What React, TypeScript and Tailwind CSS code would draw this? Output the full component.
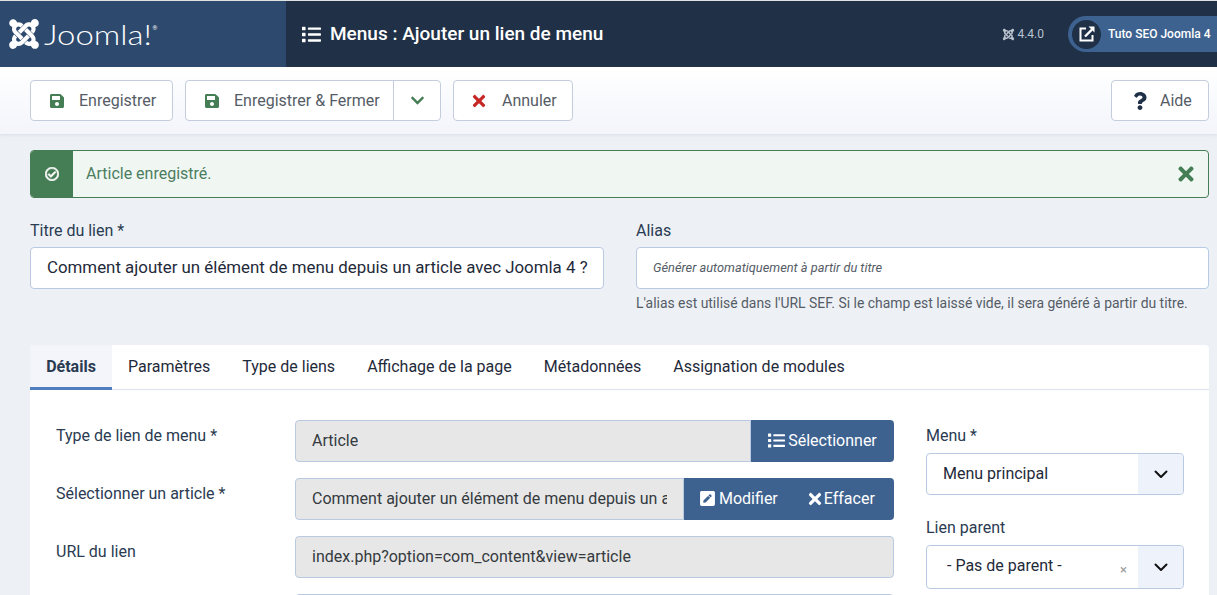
import { FaChevronDown, FaJoomla, FaList, FaPenSquare, FaQuestion, FaRegCheckCircle, FaSave, FaTimes } from "react-icons/fa";
import type { ReactNode } from "react";

function ToolButton({ icon, label, className = "" }: { icon: ReactNode; label: string; className?: string }) {
  return (
    <div className={`flex h-[41px] items-center rounded-[4px] border border-[#c3cddd] bg-white text-[#555c66] ${className}`}>
      {icon}
      <span>{label}</span>
    </div>
  );
}

function Chevron() {
  return (
    <div className="flex h-full w-[45px] items-center justify-center rounded-r-[4px] bg-[#eef3fb]">
      <svg width="16" height="16" viewBox="0 0 16 16" fill="none" stroke="#111" strokeWidth="2" strokeLinecap="round" strokeLinejoin="round">
        <path d="M2.5 5.5 8 11l5.5-5.5" />
      </svg>
    </div>
  );
}

function FormRow({ label, children }: { label: string; children: ReactNode }) {
  return (
    <div className="flex h-[42px]">
      <div className="w-[239px] pt-[4px] text-[#2a3b52]">{label}</div>
      <div className="flex w-[599px]">{children}</div>
    </div>
  );
}

function Disabled({ text, className = "" }: { text: string; className?: string }) {
  return (
    <div className={`flex h-[42px] min-w-0 flex-1 items-center border border-[#b9c9e2] bg-[#e7e7e7] px-[16px] text-[#343a40] ${className}`}>
      <span className="overflow-hidden whitespace-nowrap">{text}</span>
    </div>
  );
}

export default function App() {
  const tabs = ["Paramètres", "Type de liens", "Affichage de la page", "Métadonnées", "Assignation de modules"];

  return (
    <div className="h-[595px] overflow-hidden bg-[#edf1f6] text-[16px] font-['Roboto',sans-serif]">
      <div className="h-[1px] bg-[#dfe1e3]" />
      <header className="flex h-[66px] items-center bg-[#1f3047] text-white">
        <div className="flex h-full w-[286px] items-center bg-[#2d4a6e] pl-[7px]">
          <FaJoomla className="text-[34px]" />
          <span className="ml-[3px] origin-left scale-x-[1.22] font-['Lato',sans-serif] text-[27px] leading-none font-light">Joomla!</span>
          <span className="mb-[14px] ml-[20px] text-[6px]">®</span>
        </div>
        <div className="flex flex-1 items-center pl-[16px]">
          <FaList className="mr-[9px] text-[19px]" />
          <h1 className="text-[19px] font-medium">Menus : Ajouter un lien de menu</h1>
        </div>
        <div className="mr-[24px] flex items-center text-[12px] text-[#b9c2cf]">
          <FaJoomla className="mr-[2px] text-[13px]" />
          4.4.0
        </div>
        <div className="flex h-[36px] w-[149px] items-center rounded-l-[18px] bg-[#3e6290] pl-[4px]">
          <div className="flex h-[29px] w-[29px] items-center justify-center rounded-full bg-[#1f3047]">
            <svg width="16" height="16" viewBox="0 0 16 16" fill="none" stroke="#fff" strokeWidth="2">
              <path d="M7 2.5H1.5v12h12V9" />
              <path d="M6 10.5 13 3.5" strokeWidth="2.4" />
              <path d="M9.5 0.5H15.5V6.5Z" fill="#fff" stroke="none" />
            </svg>
          </div>
          <span className="ml-[7px] whitespace-nowrap text-[12px] font-medium">Tuto SEO Joomla 4</span>
        </div>
      </header>

      <div className="flex h-[67px] items-center bg-gradient-to-b from-white to-[#f3f5fb] pl-[30px] pr-[8px] shadow-[0_1px_3px_rgba(120,140,170,0.2)]">
        <ToolButton className="w-[143px] pl-[18px]" label="Enregistrer" icon={<FaSave className="mr-[14px] text-[16px] text-[#457d54]" />} />
        <div className="ml-[12px] flex h-[41px] w-[256px] items-center rounded-[4px] border border-[#c3cddd] bg-white text-[#555c66]">
          <FaSave className="ml-[18px] mr-[14px] text-[16px] text-[#457d54]" />
          <span>Enregistrer & Fermer</span>
          <div className="ml-auto flex h-full w-[47px] items-center justify-center border-l border-[#c3cddd]">
            <FaChevronDown className="text-[15px] text-[#457d54]" />
          </div>
        </div>
        <ToolButton className="ml-[12px] w-[120px] pl-[16px]" label="Annuler" icon={<FaTimes className="mr-[14px] text-[18px] text-[#c52827]" />} />
        <ToolButton className="ml-auto w-[98px] pl-[19px]" label="Aide" icon={<FaQuestion className="mr-[11px] text-[18px] text-[#1f3047]" />} />
      </div>

      <main className="pl-[30px] pr-[8px] pt-[16px]">
        <div className="flex h-[48px] items-stretch overflow-hidden rounded-[4px] border border-[#457d54] bg-[#f0f7f3] text-[#4c7d5e]">
          <div className="flex w-[42px] items-center justify-center bg-[#457d54] text-white">
            <FaRegCheckCircle className="text-[14px]" stroke="currentColor" strokeWidth={24} />
          </div>
          <div className="flex flex-1 items-center pl-[13px]">Article enregistré.</div>
          <div className="flex w-[45px] items-center justify-center text-[#457d54]">
            <FaTimes className="text-[22px]" />
          </div>
        </div>

        <div className="mt-[21px] grid grid-cols-[574px_573px] gap-x-[32px]">
          <div>
            <div className="h-[28px] text-[#2a3b52]">Titre du lien *</div>
            <div className="flex h-[42px] items-center rounded-[4px] border border-[#b9c9e2] bg-white pl-[16px] text-[16.88px] text-[#1f2a3a]">
              Comment ajouter un élément de menu depuis un article avec Joomla 4 ?
            </div>
          </div>
          <div>
            <div className="h-[28px] text-[#2a3b52]">Alias</div>
            <div className="flex h-[42px] items-center rounded-[4px] border border-[#b9c9e2] bg-white pl-[16px] text-[12.8px] italic text-[#555c66]">
              Générer automatiquement à partir du titre
            </div>
            <p className="mt-[4px] whitespace-nowrap text-[13.92px] text-[#555c66]">
              L'alias est utilisé dans l'URL SEF. Si le champ est laissé vide, il sera généré à partir du titre.
            </p>
          </div>
        </div>

        <section className="mt-[31px] h-[300px] rounded-t-[4px] bg-white">
          <nav className="flex h-[45px] border-b border-[#dde3ee] text-[#1f2a3a]">
            <div className="flex h-[45px] w-[82px] items-center justify-center border-b-[3px] border-[#4f7fc0] bg-[#f3f5fa] pt-[3px] font-bold text-[#2a3b52]">Détails</div>
            {tabs.map((tab) => (
              <div key={tab} className="flex items-center px-[16px] whitespace-nowrap">{tab}</div>
            ))}
          </nav>

          <div className="flex pl-[26px] pt-[30px]">
            <div className="flex w-[838px] flex-col gap-[16px]">
              <FormRow label="Type de lien de menu *">
                <Disabled text="Article" className="rounded-l-[4px]" />
                <div className="flex w-[143px] items-center justify-center rounded-r-[4px] bg-[#3e6290] text-white">
                  <FaList className="mr-[3px] text-[17px]" />
                  Sélectionner
                </div>
              </FormRow>
              <FormRow label="Sélectionner un article *">
                <Disabled text="Comment ajouter un élément de menu depuis un article avec Joomla 4 ?" className="rounded-l-[4px]" />
                <div className="flex w-[210px] items-center rounded-r-[4px] bg-[#3e6290] pl-[15px] text-white">
                  <FaPenSquare className="mr-[3px] text-[17px]" />
                  Modifier
                  <FaTimes className="ml-[28px] text-[18px]" />
                  Effacer
                </div>
              </FormRow>
              <FormRow label="URL du lien">
                <Disabled text="index.php?option=com_content&view=article" className="rounded-[4px]" />
              </FormRow>
              <FormRow label="">
                <div className="h-[42px] flex-1 rounded-[4px] border border-[#b9c9e2] bg-white" />
              </FormRow>
            </div>

            <div className="ml-[32px] w-[258px] pt-[4px]">
              <div className="h-[29px] text-[#2a3b52]">Menu *</div>
              <div className="flex h-[42px] items-center overflow-hidden rounded-[4px] border border-[#b9c9e2] bg-white pl-[16px] text-[#1f2a3a]">
                <span className="flex-1">Menu principal</span>
                <Chevron />
              </div>
              <div className="mt-[21px] h-[29px] text-[#2a3b52]">Lien parent</div>
              <div className="flex h-[44px] items-center overflow-hidden rounded-[4px] border border-[#b9c9e2] bg-white pl-[20px] text-[#1f2a3a]">
                <span className="mb-[2px] flex-1">- Pas de parent -</span>
                <span className="mr-[11px] mt-[6px] text-[13px] text-[#999]">×</span>
                <Chevron />
              </div>
            </div>
          </div>
        </section>
      </main>
    </div>
  );
}
